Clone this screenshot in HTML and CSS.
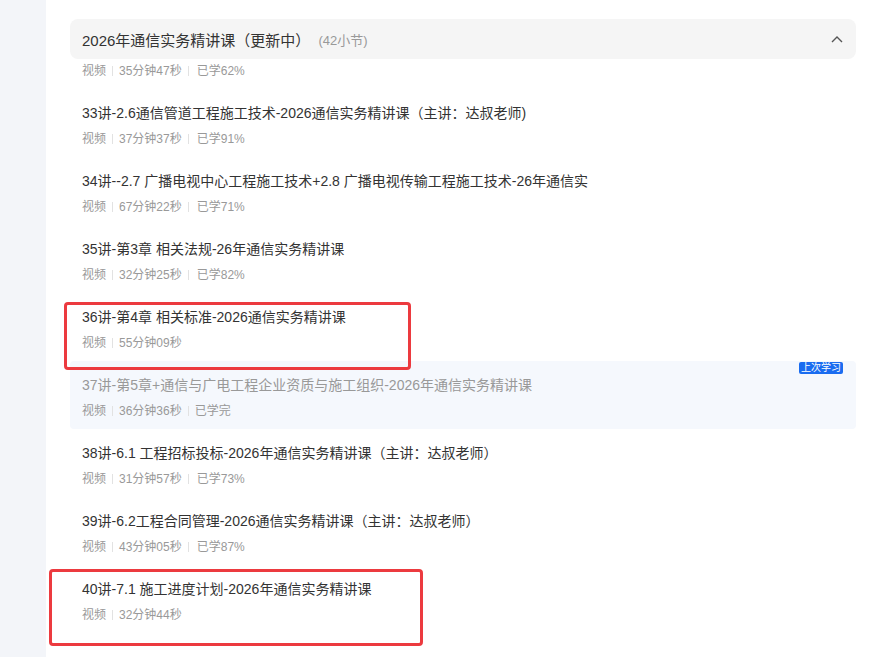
FILE: index.html
```html
<!DOCTYPE html>
<html lang="zh-CN">
<head>
    <meta charset="UTF-8">
    <title>课程目录</title>
    <link rel="stylesheet" href="styles.css">
</head>
<body>
<div class="page">
    <div class="side"></div>
    <div class="chapter">
        <div class="chapter-head">
            <span class="chapter-name">2026年通信实务精讲课（更新中）</span>
            <span class="chapter-count">(42小节)</span>
            <svg class="arrow" width="12" height="8" viewBox="0 0 12 8">
                <polyline points="1,7 6,2 11,7" fill="none" stroke="#555" stroke-width="1.4"/>
            </svg>
        </div>
        <ul class="lessons">
            <li class="lesson lesson-cut">
                <div class="meta">视频<i></i>35分钟47秒<i></i><span class="learned">已学62%</span></div>
            </li>
            <li class="lesson">
                <div class="name">33讲-2.6通信管道工程施工技术-2026通信实务精讲课（主讲：达叔老师)</div>
                <div class="meta">视频<i></i>37分钟37秒<i></i><span class="learned">已学91%</span></div>
            </li>
            <li class="lesson">
                <div class="name">34讲--2.7 广播电视中心工程施工技术+2.8 广播电视传输工程施工技术-26年通信实</div>
                <div class="meta">视频<i></i>67分钟22秒<i></i><span class="learned">已学71%</span></div>
            </li>
            <li class="lesson">
                <div class="name">35讲-第3章 相关法规-26年通信实务精讲课</div>
                <div class="meta">视频<i></i>32分钟25秒<i></i><span class="learned">已学82%</span></div>
            </li>
            <li class="lesson">
                <div class="name">36讲-第4章 相关标准-2026通信实务精讲课</div>
                <div class="meta">视频<i></i>55分钟09秒</div>
                <span class="mark mark-a"></span>
            </li>
            <li class="lesson lesson-last">
                <div class="name">37讲-第5章+通信与广电工程企业资质与施工组织-2026年通信实务精讲课</div>
                <div class="meta">视频<i></i>36分钟36秒<i></i>已学完</div>
                <span class="tag">上次学习</span>
            </li>
            <li class="lesson">
                <div class="name">38讲-6.1 工程招标投标-2026年通信实务精讲课（主讲：达叔老师）</div>
                <div class="meta">视频<i></i>31分钟57秒<i></i><span class="learned">已学73%</span></div>
            </li>
            <li class="lesson">
                <div class="name">39讲-6.2工程合同管理-2026通信实务精讲课（主讲：达叔老师）</div>
                <div class="meta">视频<i></i>43分钟05秒<i></i><span class="learned">已学87%</span></div>
            </li>
            <li class="lesson">
                <div class="name">40讲-7.1 施工进度计划-2026年通信实务精讲课</div>
                <div class="meta">视频<i></i>32分钟44秒</div>
                <span class="mark mark-b"></span>
            </li>
        </ul>
    </div>
</div>
</body>
</html>
```
FILE: styles.css
```css
*{
    margin:0;
    padding:0;
    box-sizing:border-box;
}
body{
    font-family:"Liberation Sans","Noto Sans CJK SC",sans-serif;
    background:#fff;
    color:#333;
}
.page{
    display:flex;
    height:657px;
    overflow:hidden;
}
.side{
    width:46px;
    flex:none;
    background:#f3f5f9;
}
.chapter{
    width:810px;
    padding:19px 0 0 24px;
}

/*章节标题*/
.chapter-head{
    display:flex;
    align-items:center;
    height:40px;
    padding:0 13px 0 12px;
    background:#f5f5f5;
    border-radius:8px;
}
.chapter-name{
    font-size:15px;
    color:#333;
}
.chapter-count{
    font-size:13px;
    color:#999;
    margin-left:8px;
}
.chapter-head .arrow{
    margin-left:auto;
}

/*课时列表*/
.lessons{
    list-style:none;
}
.lesson{
    position:relative;
    height:68px;
    padding:14px 12px 0;
}
.lesson-cut{
    height:30px;
    padding-top:3px;
}
.lesson .name{
    font-size:14px;
    line-height:20px;
    height:20px;
    white-space:nowrap;
}
.lesson .meta{
    display:flex;
    align-items:center;
    margin-top:7px;
    font-size:12px;
    line-height:18px;
    color:#999;
}
.lesson-cut .meta{
    margin-top:0;
}
.meta i{
    display:inline-block;
    width:1px;
    height:10px;
    background:#e2e2e2;
    margin:0 6px;
}
.meta .learned{
    padding-left:2px;
}
.lesson-last{
    background:#f5f8fd;
    border-radius:4px;
}
.lesson-last .name{
    color:#999;
}
.tag{
    position:absolute;
    top:1px;
    right:13px;
    padding:0 2px;
    height:12px;
    line-height:12px;
    font-size:10px;
    color:#fff;
    background:#1a6cf0;
    border-radius:2px;
}

/*红框标注*/
.mark{
    position:absolute;
    z-index:1;
    border:3px solid #ec3a3f;
    border-radius:4px;
}
.mark-a{
    left:-6px;
    top:9px;
    width:347px;
    height:68px;
}
.mark-b{
    left:-21px;
    top:4px;
    width:374px;
    height:77px;
}
```
